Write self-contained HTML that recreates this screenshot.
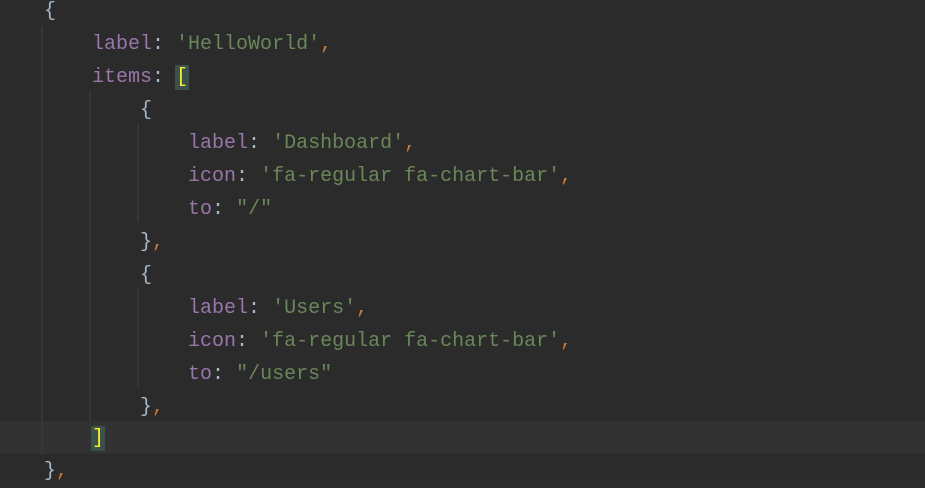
<!DOCTYPE html>
<html><head><style>
body{margin:0;width:925px;height:486px;background:#2b2b2b;overflow:hidden;position:relative;font-family:"Liberation Mono",monospace;font-size:20px;color:#a9b7c6}
.l{position:absolute;left:44px;height:33px;line-height:33px;white-space:pre;margin-top:2px}
.p{color:#9876aa}.s{color:#6a8759}.o{color:#cc7832}
.b{background:#3b514d;color:#ffef28;outline:1px solid #3b514d}
.g{position:absolute;width:2px;background:#373737}
.cur{position:absolute;left:0;top:421px;width:925px;height:33px;background:#323232}
</style></head><body>
<div class="cur"></div>
<div class="g" style="left:41px;top:26px;height:428px"></div>
<div class="g" style="left:89px;top:91px;height:330px"></div>
<div class="g" style="left:137px;top:124px;height:98px"></div>
<div class="g" style="left:137px;top:289px;height:98px"></div>
<div class="l" style="top:-7px">{</div>
<div class="l" style="top:26px">    <span class="p">label</span>: <span class="s">'HelloWorld'</span><span class="o">,</span></div>
<div class="l" style="top:59px">    <span class="p">items</span>: <span class="b">[</span></div>
<div class="l" style="top:92px">        {</div>
<div class="l" style="top:125px">            <span class="p">label</span>: <span class="s">'Dashboard'</span><span class="o">,</span></div>
<div class="l" style="top:158px">            <span class="p">icon</span>: <span class="s">'fa-regular fa-chart-bar'</span><span class="o">,</span></div>
<div class="l" style="top:191px">            <span class="p">to</span>: <span class="s">"/"</span></div>
<div class="l" style="top:224px">        }<span class="o">,</span></div>
<div class="l" style="top:257px">        {</div>
<div class="l" style="top:290px">            <span class="p">label</span>: <span class="s">'Users'</span><span class="o">,</span></div>
<div class="l" style="top:323px">            <span class="p">icon</span>: <span class="s">'fa-regular fa-chart-bar'</span><span class="o">,</span></div>
<div class="l" style="top:356px">            <span class="p">to</span>: <span class="s">"/users"</span></div>
<div class="l" style="top:389px">        }<span class="o">,</span></div>
<div class="l" style="top:420px">    <span class="b">]</span></div>
<div class="l" style="top:453px">}<span class="o">,</span></div>
</body></html>
